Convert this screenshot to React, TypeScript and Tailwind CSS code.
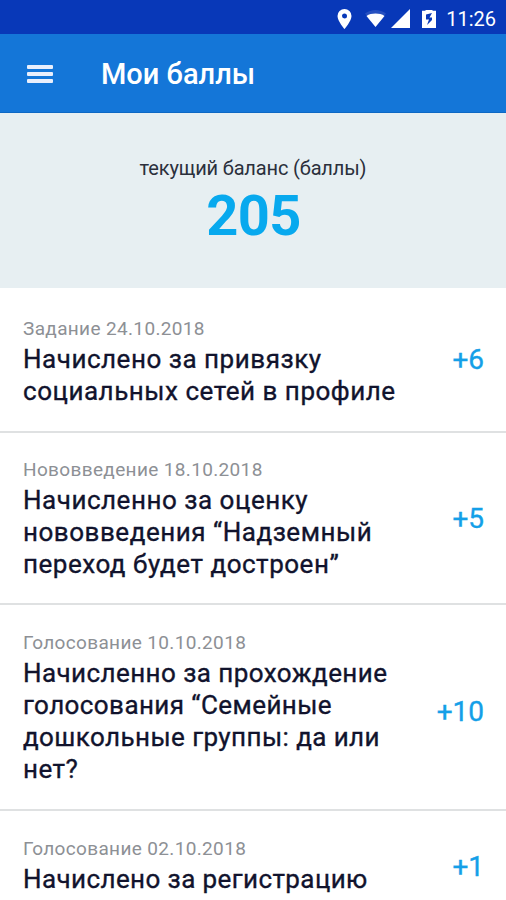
import { clsx } from "clsx";

interface PointsEntry {
    id: number;
    kind: string;
    date: string;
    lines: string[];
    amount: string;
    className: string;
    amountClass?: string;
}

const entries: PointsEntry[] = [
    {
        id: 1,
        kind: "Задание",
        date: "24.10.2018",
        lines: ["Начислено за привязку", "социальных сетей в профиле"],
        amount: "+6",
        className: "h-[145px] pt-[29px] tracking-[0.52px]",
        amountClass: "pb-1",
    },
    {
        id: 2,
        kind: "Нововведение",
        date: "18.10.2018",
        lines: ["Начисленно за оценку", "нововведения “Надземный", "переход будет достроен”"],
        amount: "+5",
        className: "h-[172px] pt-[25px] tracking-[0.52px]",
    },
    {
        id: 3,
        kind: "Голосование",
        date: "10.10.2018",
        lines: ["Начисленно за прохождение", "голосования “Семейные", "дошкольные группы: да или", "нет?"],
        amount: "+10",
        className: "h-[206px] pt-[26px] tracking-[0.42px]",
        amountClass: "pt-[7px]",
    },
    {
        id: 4,
        kind: "Голосование",
        date: "02.10.2018",
        lines: ["Начислено за регистрацию"],
        amount: "+1",
        className: "h-[113px] pt-[26px] tracking-[0.4px]",
        amountClass: "pb-1",
    },
];

function StatusBar() {
    return (
        <div className="flex h-[34px] shrink-0 items-center justify-end bg-[#0838b8] pr-[10px] pt-[3px] text-white">
            <svg className="mr-[13px] h-[20px] w-[15px]" viewBox="0 0 15 20" fill="currentColor">
                <path fillRule="evenodd" d="M7.5 0A7 7 0 0 0 .5 7c0 5 7 13 7 13s7-8 7-13a7 7 0 0 0-7-7zm0 4.5a2.5 2.5 0 1 1 0 5 2.5 2.5 0 0 1 0-5z" />
            </svg>
            <svg className="mr-[5px] h-[17px] w-[21px]" viewBox="0 0 21 17" fill="currentColor">
                <path d="M10.5 0C6.6 0 3 1.3 0 3.5L10.5 17 21 3.5C18 1.3 14.400 0 10.5 0z" opacity="0.12" />
                <path d="M1.500 6c2.500-1.800 5.500-2.500 9-2.500s6.500.7 9 2.500l-9 11z" />
            </svg>
            <svg className="mr-3 h-[19px] w-[19px]" viewBox="0 0 19 19" fill="currentColor">
                <path d="M19 0v19H0z" />
            </svg>
            <svg className="mr-[10px] h-[18px] w-[14px]" viewBox="0 0 14 18">
                <path d="M3.500 0h7v.8H14V18H0V.8h3.500z" fill="white" />
                <path d="M10 3L4 4.500v5h3L5 15l5-5V7.500H7.500z" fill="#0838b8" />
            </svg>
            <span className="text-[20px] leading-5">11:26</span>
        </div>
    );
}

function AppBar() {
    return (
        <header className="flex h-[79px] shrink-0 items-center border-b border-[#0d68c4] bg-[#1476d8] pl-[27px] pt-0.5 text-white">
            <button className="flex w-[26px] flex-col gap-[3px]" aria-label="Меню">
                <span className="h-1 w-full rounded-[1px] bg-[#e9effc]" />
                <span className="h-1 w-full rounded-[1px] bg-[#e9effc]" />
                <span className="h-1 w-full rounded-[1px] bg-[#e9effc]" />
            </button>
            <h1 className="ml-12 text-[29px] font-medium leading-9">Мои баллы</h1>
        </header>
    );
}

function Balance() {
    return (
        <section className="flex h-[175px] shrink-0 flex-col items-center bg-[#e7eff2] pt-[43px]">
            <p className="text-[20px] leading-6 tracking-[-0.15px] text-[#2b303c]">текущий баланс (баллы)</p>
            <p className="mt-1.5 pl-px text-[56px] font-bold leading-[60px] tracking-[-0.6px] text-[#08a9ee]">205</p>
        </section>
    );
}

function EntryRow({ entry, last }: { entry: PointsEntry; last: boolean }) {
    return (
        <li className={clsx("flex justify-between pl-[23px] pr-[22px]", entry.className, !last && "border-b-2 border-[#dfe1e2]")}>
            <div className="whitespace-nowrap">
                <p className="text-[19px] leading-6 tracking-[0.35px] text-[#8d9095]">
                    {entry.kind} {entry.date}
                </p>
                <p className="mt-0.5 text-[26px] leading-8 text-[#11132d] [-webkit-text-stroke:0.35px]">
                    {entry.lines.map((line) => (
                        <span key={line} className="block">{line}</span>
                    ))}
                </p>
            </div>
            <span className={clsx("-mt-6 flex items-center text-[28px] tracking-normal text-[#149fe8] [-webkit-text-stroke:0.35px]", entry.amountClass)}>
                {entry.amount}
            </span>
        </li>
    );
}

export default function App() {
    return (
        <div className="flex h-[900px] w-[506px] flex-col overflow-hidden bg-white font-['Roboto','Noto_Sans',sans-serif]">
            <StatusBar />
            <AppBar />
            <Balance />
            <ul className="shrink-0">
                {entries.map((entry, i) => (
                    <EntryRow key={entry.id} entry={entry} last={i === entries.length - 1} />
                ))}
            </ul>
        </div>
    );
}
